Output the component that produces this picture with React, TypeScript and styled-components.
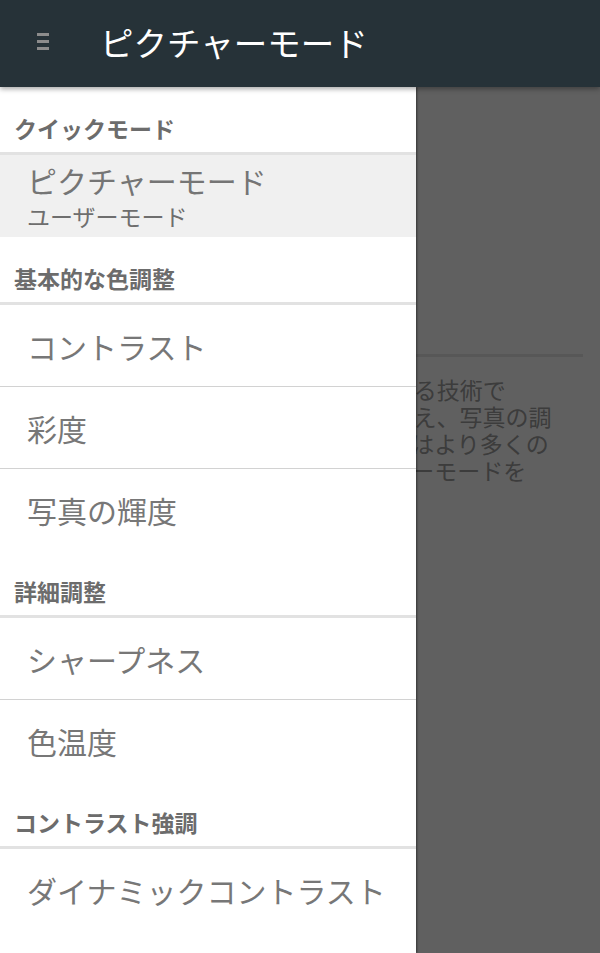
import styled, { createGlobalStyle } from 'styled-components';

const GlobalStyle = createGlobalStyle`
	html, body {
		margin: 0;
		padding: 0;
		background: #fff;
	}
	body {
		font-family: "Noto Sans CJK JP", "Noto Sans", sans-serif;
	}
`;

const Screen = styled.div`
	position: relative;
	width: 600px;
	height: 953px;
	overflow: hidden;
	display: flex;
	flex-direction: column;
`;

const AppBar = styled.header`
	flex: none;
	height: 87px;
	box-sizing: border-box;
	padding: 0 0 4px 37px;
	display: flex;
	align-items: center;
	background: #263238;
	position: relative;
	z-index: 3;
	box-shadow: 0 2px 5px rgba(0, 0, 0, 0.35);
`;

const Title = styled.h1`
	margin: 0 0 0 51px;
	font-size: 33.5px;
	font-weight: 400;
	line-height: 40px;
	color: #fff;
`;

const Body = styled.div`
	position: relative;
	flex: 1;
	background: #fff;
`;

/* the page that sits under the open drawer */
const Page = styled.div`
	padding: 267px 17px 0;
`;

const PageRule = styled.hr`
	margin: 0 0 19px;
	border: 0;
	height: 3px;
	background: #e8e8e8;
`;

const PageText = styled.p`
	margin: 0;
	padding-left: 6px;
	font-size: 23px;
	line-height: 27px;
	color: #a0a0a0;
	white-space: nowrap;

	span {
		display: block;
	}
`;

const Scrim = styled.div`
	position: absolute;
	inset: 0;
	background: rgba(0, 0, 0, 0.624);
`;

const Drawer = styled.nav`
	position: absolute;
	top: 0;
	left: 0;
	bottom: 0;
	width: 416px;
	background: #fff;
	box-shadow: 1px 0 2px rgba(0, 0, 0, 0.45);
	z-index: 2;
`;

const SectionTitle = styled.div`
	height: 68px;
	box-sizing: border-box;
	padding: 0 0 10px 14px;
	display: flex;
	align-items: flex-end;
	border-bottom: 3px solid #e2e2e2;
	font-size: 23px;
	font-weight: 700;
	line-height: 28px;
	color: #6c6c6c;
`;

const Item = styled.div`
	height: 81px;
	box-sizing: border-box;
	padding-left: 27px;
	display: flex;
	align-items: center;
	font-size: 30px;
	color: #777;

	& + & {
		height: 82px;
		border-top: 1px solid #d2d2d2;
	}
`;

const SelectedItem = styled.div`
	height: 82px;
	box-sizing: border-box;
	padding: 7px 0 0 27px;
	background: #f0f0f0;
	color: #757575;
`;

const ItemTitle = styled.div`
	font-size: 30px;
	line-height: 36px;
`;

const ItemSub = styled.div`
	margin-top: 3px;
	font-size: 23px;
	line-height: 30px;
	color: #6e6e6e;
`;

const MenuIcon = () => (
	<svg width="12" height="17" viewBox="0 0 12 17">
		<rect x="0" y="0" width="12" height="3" fill="#8c8c8c" />
		<rect x="0" y="7" width="12" height="3" fill="#8c8c8c" />
		<rect x="0" y="14" width="12" height="3" fill="#8c8c8c" />
	</svg>
);

const sections = [
	{ title: '基本的な色調整', items: ['コントラスト', '彩度', '写真の輝度'] },
	{ title: '詳細調整', items: ['シャープネス', '色温度'] },
	{ title: 'コントラスト強調', items: ['ダイナミックコントラスト'] },
];

const pageLines = [
	'ピクチャーモードは映像の色を調整する技術で',
	'映像の明るさやコントラストを切り替え、写真の調',
	'整に合うモードです。ユーザーモードはより多くの',
	'項目を細かく微調整できます。ユーザーモードを',
];

const App = () => {
	return (
		<Screen>
			<GlobalStyle />
			<AppBar>
				<MenuIcon />
				<Title>ピクチャーモード</Title>
			</AppBar>
			<Body>
				<Page>
					<PageRule />
					<PageText>
						{pageLines.map((line) => (
							<span key={line}>{line}</span>
						))}
					</PageText>
				</Page>
				<Scrim />
				<Drawer>
					<SectionTitle>クイックモード</SectionTitle>
					<SelectedItem>
						<ItemTitle>ピクチャーモード</ItemTitle>
						<ItemSub>ユーザーモード</ItemSub>
					</SelectedItem>
					{sections.map((section) => (
						<div key={section.title}>
							<SectionTitle>{section.title}</SectionTitle>
							{section.items.map((item) => (
								<Item key={item}>{item}</Item>
							))}
						</div>
					))}
				</Drawer>
			</Body>
		</Screen>
	);
};

export default App;
